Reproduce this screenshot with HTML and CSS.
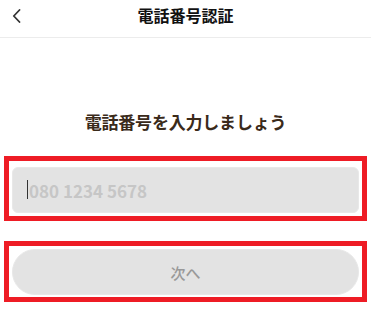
FILE: index.html
```html
<!DOCTYPE html>
<html lang="ja">
<head>
<meta charset="utf-8">
<title>電話番号認証</title>
<link rel="stylesheet" href="styles.css">
</head>
<body>
<header class="topbar">
  <div class="topbar-left">
    <svg class="back" width="10" height="14" viewBox="0 0 10 14" aria-hidden="true">
      <path d="M7.5 1 L1.8 7 L7.5 13" fill="none" stroke="#333" stroke-width="1.8" stroke-linecap="round" stroke-linejoin="round"/>
    </svg>
  </div>
  <h1 class="title">電話番号認証</h1>
  <div></div>
</header>
<main class="content">
  <h2 class="heading">電話番号を入力しましょう</h2>
  <div class="frame frame-input">
    <div class="field">
      <span class="caret"></span>
      <input class="phone" type="tel" placeholder="080 1234 5678">
    </div>
  </div>
  <div class="frame frame-button">
    <button class="next" type="button">次へ</button>
  </div>
</main>
</body>
</html>
```
FILE: styles.css
```css
* { box-sizing: border-box; }
html, body { margin: 0; padding: 0; background: #fff; }
body {
  font-family: "Noto Sans CJK JP", "Noto Sans", sans-serif;
  width: 371px;
}
.topbar {
  display: grid;
  grid-template-columns: 1fr auto 1fr;
  align-items: center;
  height: 38px;
  padding-bottom: 7px;
  border-bottom: 1px solid #ececec;
}
.topbar-left { display: flex; align-items: center; padding-left: 12px; padding-top: 2px; }
.back { display: block; }
.title {
  margin: 0;
  font-size: 16px;
  font-weight: 700;
  line-height: 22px;
  color: #111;
}
.content { display: flex; flex-direction: column; }
.heading {
  margin: 72px 0 0;
  text-align: center;
  font-size: 17px;
  line-height: 24px;
  font-weight: 700;
  color: #3a2a1a;
  letter-spacing: -0.2px;
}
.frame {
  margin-left: 4px;
  width: 363px;
  border: 5px solid #ee1c25;
}
.frame-input { margin-top: 22px; padding: 6px 3px 3px 3px; }
.frame-button { margin-top: 20px; padding: 3px 3px 2px 3px; }
.field { position: relative; }
.caret {
  position: absolute;
  left: 15px;
  top: 13px;
  width: 1px;
  height: 19px;
  background: #333;
}
.phone {
  display: block;
  width: 100%;
  height: 46px;
  margin: 0;
  padding: 0 0 0 16px;
  border: 1px solid #e8e8e8;
  border-radius: 6px;
  background: #e3e3e3;
  font-family: "Noto Sans CJK JP", "Noto Sans", sans-serif;
  font-size: 17px;
  font-weight: 700;
  color: #333;
  outline: none;
}
.phone::placeholder { color: #c6c6c6; opacity: 1; }
.next {
  display: block;
  width: 100%;
  height: 46px;
  margin: 0;
  border: 1px solid #e8e8e8;
  border-radius: 23px;
  background: #e3e3e3;
  font-family: "Noto Sans CJK JP", "Noto Sans", sans-serif;
  font-size: 15px;
  font-weight: 500;
  color: #999;
}
```
